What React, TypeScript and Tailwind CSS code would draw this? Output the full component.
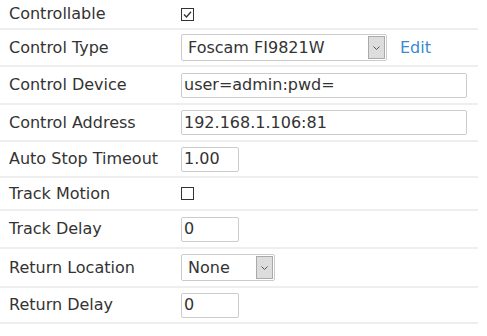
import React from 'react';

const font = { fontFamily: '"DejaVu Sans", Verdana, sans-serif' };

const Row: React.FC<{ label: string; h: string; children: React.ReactNode }> = ({ label, h, children }) => (
  <div className={`flex items-center border-b-2 border-[#eeeeee] ${h}`}>
    <div className="w-[181px] shrink-0 pl-[9px] text-[16px] text-[#333333]">{label}</div>
    <div className="flex items-center">{children}</div>
  </div>
);

const Checkbox: React.FC<{ checked?: boolean }> = ({ checked }) => (
  <div className="w-[13px] h-[13px] border border-[#333333] bg-white flex items-center justify-center">
    {checked && (
      <svg width="11" height="11" viewBox="0 0 11 11">
        <path d="M2 5.5 L4.5 8 L9 2.8" fill="none" stroke="#333333" strokeWidth="1.3" />
      </svg>
    )}
  </div>
);

const TextBox: React.FC<{ value: string; w: string }> = ({ value, w }) => (
  <div className={`${w} h-[25px] border border-[#cccccc] rounded-[2px] bg-white flex items-center pl-[2px] text-[16px] text-[#333333] whitespace-nowrap overflow-hidden`}>
    {value}
  </div>
);

const SelectBox: React.FC<{ value: string; w: string }> = ({ value, w }) => (
  <div className={`${w} h-[27px] border border-[#cccccc] rounded-[2px] bg-white flex items-stretch text-[16px] text-[#333333]`}>
    <div className="flex-1 flex items-center pl-[6px] whitespace-nowrap overflow-hidden">{value}</div>
    <div className="w-[17px] m-[1px] bg-[#dddddd] border border-[#aaaaaa] flex items-center justify-center">
      <svg width="9" height="6" viewBox="0 0 9 6">
        <path d="M1.5 1.5 L4.5 4.5 L7.5 1.5" fill="none" stroke="#555555" strokeWidth="1" />
      </svg>
    </div>
  </div>
);

export default function App() {
  return (
    <div className="w-[487px] h-[336px] bg-white" style={font}>
      <div className="w-[478px]">
        <Row label="Controllable" h="h-[30px]">
          <Checkbox checked />
        </Row>
        <Row label="Control Type" h="h-[37px]">
          <SelectBox value="Foscam FI9821W" w="w-[206px]" />
          <span className="ml-[13px] text-[16px] text-[#3a8ad0]">Edit</span>
        </Row>
        <Row label="Control Device" h="h-[38px]">
          <TextBox value="user=admin:pwd=" w="w-[286px]" />
        </Row>
        <Row label="Control Address" h="h-[37px]">
          <TextBox value="192.168.1.106:81" w="w-[286px]" />
        </Row>
        <Row label="Auto Stop Timeout" h="h-[36px]">
          <TextBox value="1.00" w="w-[58px]" />
        </Row>
        <Row label="Track Motion" h="h-[33px]">
          <Checkbox />
        </Row>
        <Row label="Track Delay" h="h-[38px]">
          <TextBox value="0" w="w-[58px]" />
        </Row>
        <Row label="Return Location" h="h-[39px]">
          <SelectBox value="None" w="w-[94px]" />
        </Row>
        <Row label="Return Delay" h="h-[36px]">
          <TextBox value="0" w="w-[58px]" />
        </Row>
      </div>
    </div>
  );
}
